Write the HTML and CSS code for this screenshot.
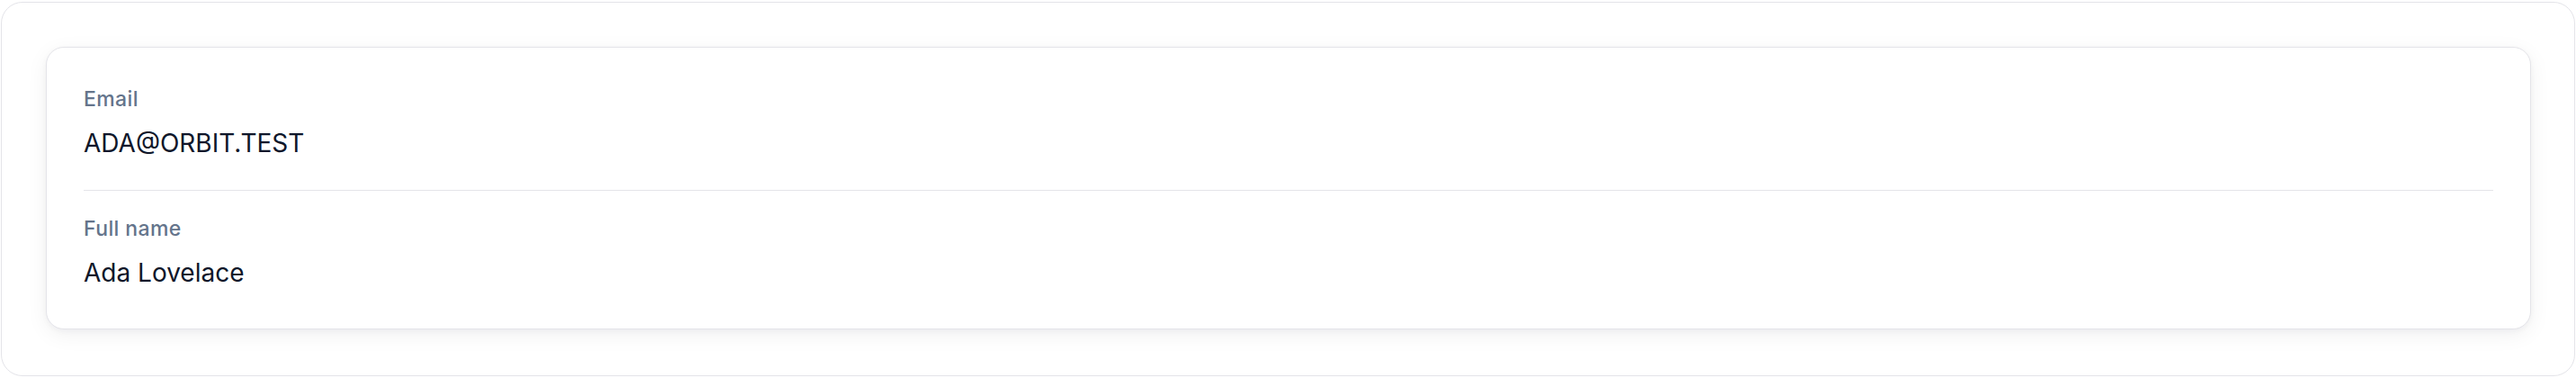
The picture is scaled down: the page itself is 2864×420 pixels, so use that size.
FILE: index.html
```html
<!DOCTYPE html>
<html lang="en">
<head>
<meta charset="utf-8">
<title>Profile</title>
<link rel="stylesheet" href="styles.css">
</head>
<body>
  <div class="frame">
    <section class="card">
      <div class="field">
        <div class="label">Email</div>
        <div class="value">ADA@ORBIT.TEST</div>
      </div>
      <div class="divider"></div>
      <div class="field">
        <div class="label">Full name</div>
        <div class="value">Ada Lovelace</div>
      </div>
    </section>
  </div>
</body>
</html>
```
FILE: styles.css
```css
html, body {
  margin: 0;
  background: #ffffff;
}
body {
  padding: 2px 1px 2px 1px;
  font-family: Inter, "Noto Sans", sans-serif;
}
.frame {
  height: 416px;
  box-sizing: border-box;
  border: 1px solid #e4e4e9;
  border-radius: 24px;
  background: #ffffff;
  padding: 49px 48px 50px 49px;
}
.card {
  box-sizing: border-box;
  height: 314px;
  border: 1px solid #e4e4e9;
  border-radius: 20px;
  background: #ffffff;
  box-shadow: 0 6px 24px rgba(15, 23, 42, 0.06), 0 2px 6px rgba(15, 23, 42, 0.04);
  padding: 15px 41px 8px 41px;
}
.field {
  padding: 28px 0 34px 0;
}
.label {
  font-size: 23px;
  line-height: 28px;
  letter-spacing: 0.4px;
  color: #64748b;
  font-weight: 500;
}
.value {
  margin-top: 17px;
  font-size: 28px;
  line-height: 36px;
  color: #0f172a;
}
.divider {
  height: 1px;
  background: #e4e4e9;
}
```
